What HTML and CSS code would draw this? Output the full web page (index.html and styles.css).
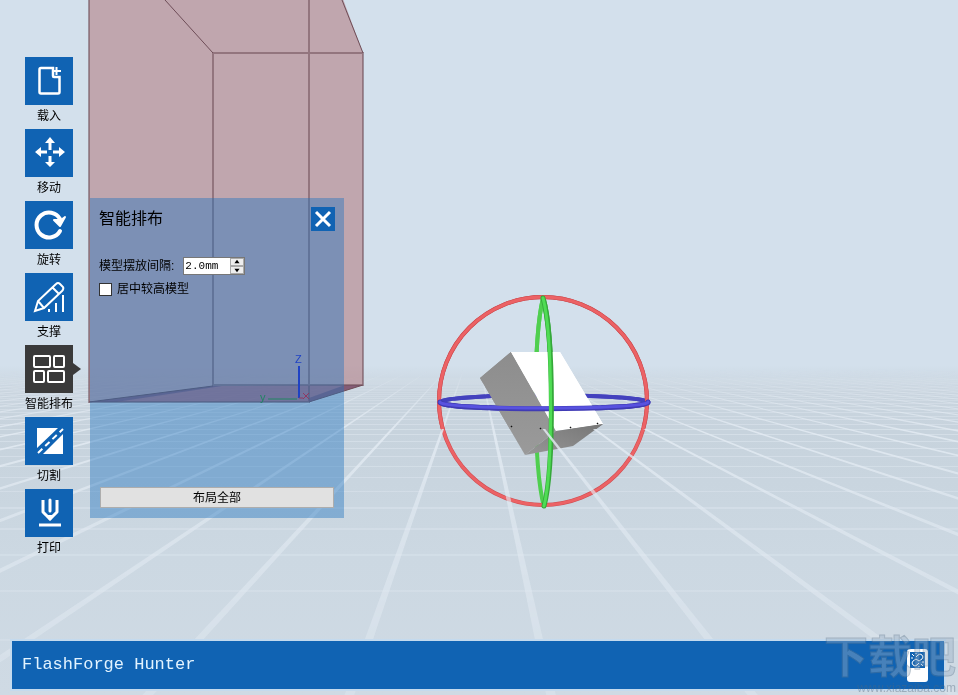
FILE: index.html
```html
<!DOCTYPE html>
<html lang="zh-Hans">
<head>
  <meta charset="UTF-8">
  <meta name="viewport" content="width=device-width, initial-scale=1.0">
  <title>FlashForge Hunter</title>
  <link rel="stylesheet" href="styles.css">
</head>
<body>
  <svg class="scene" viewBox="0 0 958 695" preserveAspectRatio="xMidYMin slice" aria-hidden="true">
    <defs>
      <linearGradient id="sky" x1="0" y1="0" x2="0" y2="1">
        <stop offset="0" stop-color="#d3e0ec"/>
        <stop offset=".525" stop-color="#d3e0ec"/>
        <stop offset=".56" stop-color="#cad5df"/>
        <stop offset=".62" stop-color="#c7d3dd"/>
        <stop offset=".8" stop-color="#ccd8e2"/>
        <stop offset="1" stop-color="#cfdae4"/>
      </linearGradient>
      <linearGradient id="fade" gradientUnits="userSpaceOnUse" x1="0" y1="368" x2="0" y2="695">
        <stop offset="0" stop-color="#000"/>
        <stop offset=".08" stop-color="#888"/>
        <stop offset=".2" stop-color="#eee"/>
        <stop offset=".45" stop-color="#aaa"/>
        <stop offset="1" stop-color="#666"/>
      </linearGradient>
      <linearGradient id="side" x1="0" y1="0" x2="0" y2="1">
        <stop offset="0" stop-color="#8d8d8d"/>
        <stop offset="1" stop-color="#9a9a9a"/>
      </linearGradient>
      <linearGradient id="under" x1="0" y1="1" x2="1" y2="0">
        <stop offset="0" stop-color="#979797"/>
        <stop offset="1" stop-color="#767676"/>
      </linearGradient>
      <mask id="floorMask" maskUnits="userSpaceOnUse" x="-200" y="360" width="1400" height="340">
        <rect x="-200" y="360" width="1400" height="340" fill="url(#fade)"/>
      </mask>
      <clipPath id="aboveFloor"><rect x="430" y="280" width="230" height="149"/></clipPath>
    </defs>

    <rect width="958" height="695" fill="url(#sky)"/>
    <g id="floorRows" fill="#e3ebf3" mask="url(#floorMask)"></g>

    <g id="model">
      <path d="M543 298C533 340 533 464 544 507" fill="none" stroke="#4fcf4f" stroke-width="4"/>
      <path d="M440 402C450 393 638 393 648 402" fill="none" stroke="#4341be" stroke-width="4"/>
      <circle cx="543" cy="401" r="104" fill="none" stroke="#cd4e52" stroke-width="4"/>
      <circle cx="543" cy="401" r="104" fill="none" stroke="#ec6265" stroke-width="3"/>
      <path d="M511 352L480 378L525 455L556 431Z" fill="url(#side)"/>
      <path d="M511 352H560L603 424L556 431Z" fill="#fff"/>
      <path d="M556 431L603 424L573 446L525 455Z" fill="url(#under)"/>
      <path d="M440 402C438 411 650 411 648 402" fill="none" stroke="#403bb5" stroke-width="5" stroke-linecap="round"/>
      <path d="M440 402C438 410 650 410 648 402" fill="none" stroke="#5852df" stroke-width="3" stroke-linecap="round"/>
      <path d="M543 298C554 335 554 470 544 506" fill="none" stroke="#35a83a" stroke-width="5" stroke-linecap="round"/>
      <path d="M543 298C553 335 553 470 544 506" fill="none" stroke="#4fdc54" stroke-width="3" stroke-linecap="round"/>
    </g>

    <g id="floorColumns" fill="#e3ebf3" mask="url(#floorMask)"></g>
    <use href="#model" clip-path="url(#aboveFloor)"/>
    <path d="M511 426h1v1h-1zM540 428h1v1h-1zM570 427h1v1h-1zM597 423h1v1h-1z" fill="#111" stroke="#111" stroke-opacity=".5"/>

    <!-- build volume -->
    <path d="M89 -1H343L363 53V385L309 402H89Z" fill="#b0747a" fill-opacity=".54"/>
    <path d="M89 402L213 386L363 385L309 402Z" fill="#8a2440" fill-opacity=".36"/>
    <path d="M89 402L213 386H222L116 402ZM309 402L363 385H345L309 398Z" fill="#40305c" fill-opacity=".36"/>
    <g fill="none" stroke="#6e4d57" stroke-opacity=".55" stroke-width="2">
      <path d="M89 0V402H309V0M213 386V53H363V385H213"/>
      <path d="M165 0L213 53M342 0L363 53M213 386L89 402M363 385L309 402" stroke-width="1" stroke-opacity="1"/>
    </g>
    <g fill="none">
      <path d="M299 366V398" stroke="#2020c8" stroke-width="2"/>
      <path d="M268 399H297" stroke="#209020"/>
      <path d="M303 393L309 399M309 393L303 399M299 398H303" stroke="#e01020"/>
    </g>
    <text x="295" y="363" class="axis axis--z">Z</text>
    <text x="260" y="401" class="axis axis--y">y</text>
  </svg>

  <main class="workspace">
    <nav class="toolbar" aria-label="工具">
      <button class="tool" type="button">
        <svg class="tool__icon" viewBox="0 0 48 48">
          <path d="M28 11H16Q14.500 11 14.500 12.500V35Q14.500 36.500 16 36.500H33Q34.500 36.500 34.500 35V20H29Q28 20 28 19Z" stroke-width="2.500"/>
          <path d="M31.500 10V18M28 14H36"/>
        </svg>
        <span class="tool__label">载入</span>
      </button>
      <button class="tool" type="button">
        <svg class="tool__icon" viewBox="0 0 48 48">
          <path d="M25 21V12M25 27V35M22 23H13M28 23H37" stroke-width="3"/>
          <path d="M25 8L20 14H30ZM25 38L20 33H30ZM10 23L16 18V28ZM40 23L34 18V28Z" fill="#fff" stroke="none"/>
        </svg>
        <span class="tool__label">移动</span>
      </button>
      <button class="tool" type="button">
        <svg class="tool__icon" viewBox="0 0 48 48">
          <path d="M35 30A12.500 12.500 0 1 1 35 18" stroke-width="4" stroke-linecap="round"/>
          <path d="M29 19L35 25L40 16L36 19Z" fill="#fff" stroke-width="2" stroke-linejoin="round"/>
        </svg>
        <span class="tool__label">旋转</span>
      </button>
      <button class="tool" type="button">
        <svg class="tool__icon" viewBox="0 0 48 48">
          <path d="M10 38L13 28L31 11Q33 9 35 11L38 14Q39 16 37 18L19 35ZM27 14L34 21M13 28L19 35"/>
          <path d="M24 39V36M31 39V30M38 39V22"/>
        </svg>
        <span class="tool__label">支撑</span>
      </button>
      <button class="tool tool--active" type="button" aria-pressed="true">
        <svg class="tool__icon" viewBox="0 0 48 48">
          <rect x="9" y="11" width="16" height="11" rx="1"/>
          <rect x="29" y="11" width="10" height="11" rx="1"/>
          <rect x="9" y="26" width="10" height="11" rx="1"/>
          <rect x="23" y="26" width="16" height="11" rx="1"/>
        </svg>
        <span class="tool__label">智能排布</span>
      </button>
      <button class="tool" type="button">
        <svg class="tool__icon" viewBox="0 0 48 48">
          <path d="M12 11H33L12 31ZM38 17V37H18Z" fill="#fff" stroke="none"/>
          <path d="M12 34L36 11M15 37L38 15" stroke="#1063b3" stroke-width="2"/>
          <path d="M13 36L38 12" stroke-dasharray="6 4"/>
        </svg>
        <span class="tool__label">切割</span>
      </button>
      <button class="tool" type="button">
        <svg class="tool__icon" viewBox="0 0 48 48">
          <path d="M18 11V23L25 30L32 23V11" stroke-width="3" stroke-linejoin="round"/>
          <path d="M25 11V22" stroke-width="3" stroke-linecap="round"/>
          <path d="M20 26H30L25 32Z" fill="#fff" stroke="none"/>
          <path d="M14 36H36" stroke-width="3"/>
        </svg>
        <span class="tool__label">打印</span>
      </button>
    </nav>

    <section class="panel" aria-labelledby="panelTitle">
      <header class="panel__header">
        <h1 class="panel__title" id="panelTitle">智能排布</h1>
        <button class="panel__close" type="button" aria-label="关闭">
          <svg viewBox="0 0 24 24"><path d="M5 5L19 19M19 5L5 19"/></svg>
        </button>
      </header>
      <div class="field">
        <label for="spacing">模型摆放间隔:</label>
        <span class="spin">
          <input class="spin__input" id="spacing" type="text" value="2.0mm">
          <span class="spin__buttons">
            <button type="button" aria-label="增加"><svg viewBox="0 0 12 7"><path d="M6 1L9 5H3Z"/></svg></button>
            <button type="button" aria-label="减少"><svg viewBox="0 0 12 7"><path d="M6 6L9 2H3Z"/></svg></button>
          </span>
        </span>
      </div>
      <label class="check"><input type="checkbox">居中较高模型</label>
      <button class="panel__apply" type="button">布局全部</button>
    </section>
  </main>

  <footer class="status">
    <span class="status__name">FlashForge Hunter</span>
    <button class="status__link" type="button" aria-label="未连接">
      <svg viewBox="0 0 21 33">
        <rect width="21" height="33" rx="3" fill="#fff"/>
        <path d="M3 3H18V19H3Z" fill="#1063b3"/>
        <path d="M9 8L11 6Q13 4 15 6T15 10L12 12M12 14L10 16Q8 18 6 16T6 12L9 10M9 10L12 12M5 5L7 7M14 15L16 17M4 9H6M15 13H17M9 4V5M12 17V18" fill="none" stroke="#fff"/>
      </svg>
    </button>
  </footer>

  <div class="watermark" aria-hidden="true">
    <span class="watermark__name">下载吧</span>
    <span class="watermark__url">www.xiazaiba.com</span>
  </div>

  <script src="floor.js"></script>
</body>
</html>
```
FILE: floor.js
```js
const rows = document.getElementById('floorRows');
const columns = document.getElementById('floorColumns');
const vanishX = 474;
const horizon = 340;
const bottom = 695;
const lineSpacing = 0.568;
const lineWidth = 0.027;

function addPath(parent, d, opacity) {
  const path = document.createElementNS('http://www.w3.org/2000/svg', 'path');
  path.setAttribute('d', d);
  path.setAttribute('opacity', opacity);
  parent.appendChild(path);
}

// lines running away from the viewer, wider the nearer they come
for (let i = -26; i <= 26; i++) {
  const slope = 0.217 + i * lineSpacing;
  const x = vanishX + slope * (bottom - horizon);
  const half = lineWidth * (bottom - horizon) * Math.sqrt(1 + slope * slope * 0.3) / 2;
  addPath(columns, `M${vanishX} ${horizon}L${x - half} ${bottom}H${x + half}Z`, 0.9);
}

// lines across the floor, closer together towards the horizon
for (let k = 0; k < 36; k++) {
  const y = Math.round(horizon + 1 / (0.003344 + k * 0.00066));
  addPath(rows, `M0 ${y}H958V${y + (k < 5 ? 2 : 1)}H0Z`, 0.5);
}
```
FILE: styles.css
```css
:root {
  --blue: #1063b3;
  --dark: #3a3a3a;
}
* { box-sizing: border-box; }
body {
  margin: 0;
  min-height: 100vh;
  display: flex;
  flex-direction: column;
  overflow: hidden;
  background: #d3e0ec;
  color: #000;
  font-family: "Liberation Sans", "Noto Sans CJK SC", sans-serif;
  font-size: 12px;
  line-height: 16px;
}
button, input {
  font: inherit;
  color: inherit;
}
button {
  padding: 0;
  border: 0;
  background: none;
  cursor: pointer;
}
svg { display: block; }
.scene {
  position: absolute;
  z-index: -1;
  width: 100%;
  height: 100%;
}
.axis {
  font-size: 11px;
}
.axis--z { fill: #2020c8; }
.axis--y { fill: #209020; }

.workspace {
  flex: 1;
  display: flex;
  align-items: flex-start;
  gap: 17px;
  padding: 57px 24px 0 25px;
}
.toolbar {
  display: flex;
  flex-direction: column;
}
.tool {
  position: relative;
  width: 48px;
  height: 72px;
}
.tool__icon {
  width: 48px;
  height: 48px;
  margin-bottom: 3px;
  background: var(--blue);
  fill: none;
  stroke: #fff;
  stroke-width: 2;
}
.tool__label {
  display: block;
  height: 21px;
  white-space: nowrap;
}
.tool--active .tool__icon {
  background: var(--dark);
}
.tool--active::after {
  content: "";
  position: absolute;
  left: 48px;
  top: 18px;
  border: 6px solid transparent;
  border-left: 8px solid var(--dark);
  border-right: 0;
}

.panel {
  display: flex;
  flex-direction: column;
  align-items: flex-start;
  width: 254px;
  min-height: 320px;
  margin-top: 141px;
  padding: 9px 9px 10px;
  background: rgba(30, 115, 190, 0.42);
}
.panel__header {
  display: flex;
  justify-content: space-between;
  align-items: center;
  width: 100%;
  margin-bottom: 26px;
}
.panel__title {
  margin: 0;
  font-size: 16px;
  font-weight: 400;
}
.panel__close {
  width: 24px;
  height: 24px;
  background: var(--blue);
}
.panel__close path {
  stroke: #fff;
  stroke-width: 3;
}
.field {
  display: flex;
  align-items: center;
  gap: 9px;
  margin-bottom: 6px;
}
.spin {
  display: flex;
  width: 62px;
  height: 18px;
  border: 1px solid #777;
  background: #fff;
}
.spin__input {
  flex: 1;
  min-width: 0;
  padding: 0 0 0 1px;
  border: 0;
  background: none;
  font-family: "Liberation Mono", monospace;
  font-size: 11px;
}
.spin__buttons {
  display: flex;
  flex-direction: column;
  width: 14px;
}
.spin__buttons button {
  flex: 1;
  border: 1px solid #aaa;
  background: #eee;
}
.spin__buttons svg {
  width: 12px;
  height: 6px;
}
.check {
  display: flex;
  align-items: center;
  gap: 5px;
}
.check input {
  appearance: none;
  width: 13px;
  height: 13px;
  margin: 0;
  border: 1px solid #333;
  background: #fff;
}
.check input:checked {
  background: var(--blue);
}
.panel__apply {
  align-self: center;
  width: 234px;
  height: 21px;
  margin-top: auto;
  border: 1px solid #adadad;
  background: #e1e1e1;
}

.status {
  display: flex;
  justify-content: space-between;
  align-items: center;
  height: 48px;
  margin: 0 14px 6px 12px;
  padding: 0 16px 0 10px;
  background: var(--blue);
  color: #e2f3ff;
  box-shadow: 0 0 0 2px #c4daee;
}
.status__name {
  font-family: "Liberation Mono", monospace;
  font-size: 17px;
  line-height: 24px;
}
.status__link {
  width: 21px;
  height: 33px;
}
.watermark {
  position: absolute;
  right: 2px;
  bottom: 0;
  display: flex;
  flex-direction: column;
  align-items: flex-end;
  opacity: 0.4;
  color: #9bb0c5;
  pointer-events: none;
  white-space: nowrap;
}
.watermark__name {
  font-size: 44px;
  font-weight: 700;
  line-height: 46px;
  -webkit-text-stroke: 1px #60788f;
}
.watermark__url {
  color: #52687c;
  font-size: 12px;
  line-height: 14px;
}
```
